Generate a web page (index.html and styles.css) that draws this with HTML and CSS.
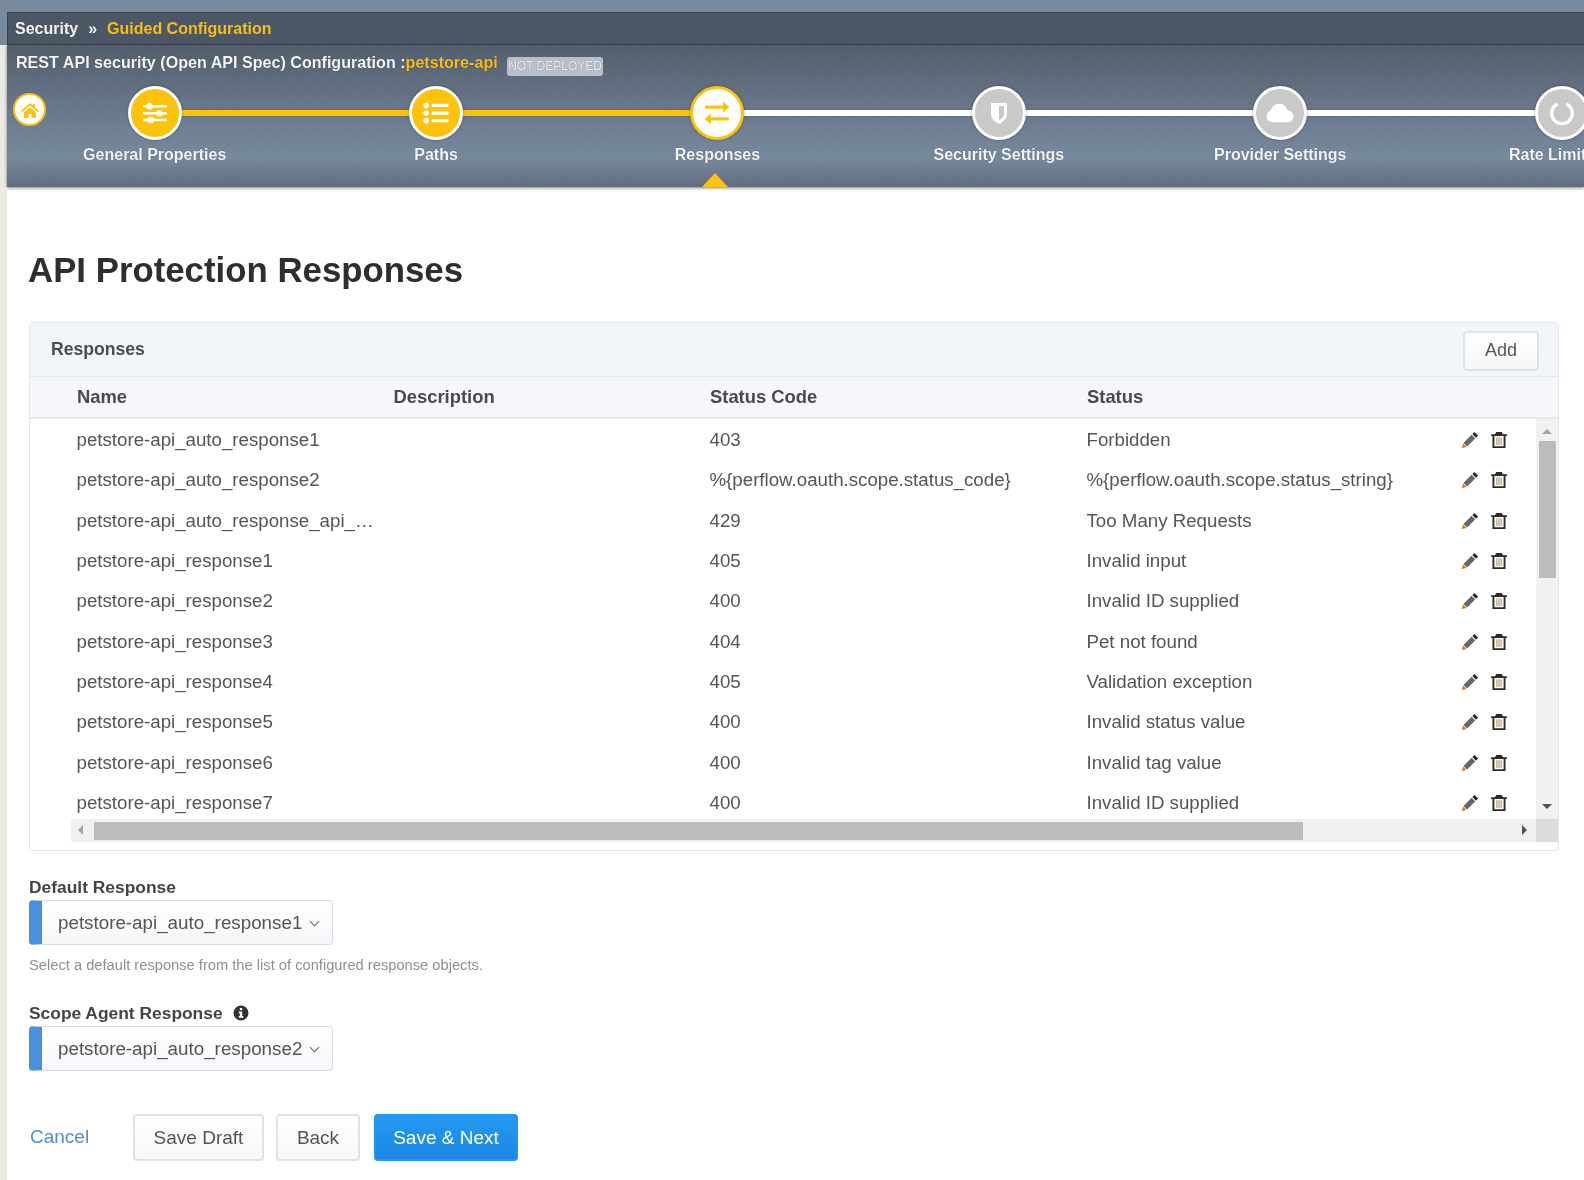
FILE: index.html
```html
<!DOCTYPE html>
<html lang="en">
<head>
  <meta charset="UTF-8">
  <title>API Protection Responses</title>
  <link rel="stylesheet" href="styles.css">
</head>
<body>
  <svg class="sprites" width="0" height="0">
    <symbol id="pencil" viewBox="0 0 16 16"><path d="M12 .8l3.200 3.200-1.900 1.900-3.200-3.200z"/><path fill="#666" d="M9.400 3.400l3.200 3.200-7.200 7.200-3.200-3.200z"/><path fill="#c97a1e" d="M1.800 11.200l3 3-4 .9z"/></symbol>
    <symbol id="trash" viewBox="0 0 16 16"><path d="M5.500 .8h5l1 2H15v1.700h-1.200V15.200H2.200V4.500H1V2.800h3.500zM3.900 4.500v9h8.200v-9z"/><path fill="#c4a877" d="M5.500 5.500h1.200v7H5.500zM7.400 5.500h1.200v7H7.400zM9.300 5.500h1.200v7H9.300z"/></symbol>
  </svg>
  <header class="top">
    <div class="crumbs">
      <span>Security</span><span class="crumb-sep">&raquo;</span><span class="gold">Guided Configuration</span>
    </div>
    <div class="wizard">
      <div class="config-title">
        REST API security (Open API Spec) Configuration :<span class="gold">petstore-api</span>
        <span class="badge">NOT DEPLOYED</span>
      </div>
      <div class="home">
        <svg viewBox="0 0 20 20" width="20" height="20"><path fill="#fcc30a" d="M10 3l3 2.600V4h2v3.300L19 11l-1.200 1.200L10 5.400 2.200 12.200 1 11zM4 12.500l6-5.200 6 5.200V18h-4.400v-4H8.400v4H4z"/></svg>
      </div>
      <ol class="steps">
        <li class="step done">
          <span class="dot">
            <svg viewBox="0 0 24 24" width="26" height="26" fill="#fff"><path d="M1 4.500h22v2.400H1zM1 11h22v2.400H1zM1 17.300h22v2.400H1z"/><circle cx="7" cy="5.700" r="3"/><circle cx="16" cy="12.200" r="3"/><circle cx="8" cy="18.500" r="3"/></svg>
          </span>
          <span class="step-name">General Properties</span>
        </li>
        <li class="step done">
          <span class="dot">
            <svg viewBox="0 0 24 24" width="26" height="26" fill="#fff"><circle cx="3" cy="5" r="2.600"/><circle cx="3" cy="12" r="2.600"/><circle cx="3" cy="19" r="2.600"/><path d="M8 3.500h15.500v3H8zM8 10.500h15.500v3H8zM8 17.500h15.500v3H8z"/></svg>
          </span>
          <span class="step-name">Paths</span>
        </li>
        <li class="step current">
          <span class="dot">
            <svg viewBox="0 0 24 24" width="26" height="26" fill="#fcc30a"><path d="M1 6.500h16.500V3L23.500 8l-6 5V9.500H1zM23 14.500v3H6.500V14L.5 19l6 5v-3.500H23z" transform="translate(0 -1.500)"/></svg>
          </span>
          <span class="step-name">Responses</span>
        </li>
        <li class="step">
          <span class="dot">
            <svg viewBox="0 0 24 24" width="24" height="24"><path fill="#fff" d="M4 2h16v11c0 5-4 8-8 10-4-2-8-5-8-10z"/><path fill="#c9c9c9" d="M12 5h5v8c0 3-2.500 5-5 6.500z"/></svg>
          </span>
          <span class="step-name">Security Settings</span>
        </li>
        <li class="step">
          <span class="dot">
            <svg viewBox="0 0 24 24" width="28" height="28" fill="#fff"><path d="M6 20c-3 0-5.500-2.300-5.500-5.200 0-2.400 1.600-4.300 3.700-5C5 6.200 8 4 11.300 4c3.500 0 6.400 2.400 7 5.600 3 .3 5.200 2.600 5.200 5.300 0 2.900-2.500 5.100-5.500 5.100z"/></svg>
          </span>
          <span class="step-name">Provider Settings</span>
        </li>
        <li class="step step-last">
          <span class="dot">
            <svg viewBox="0 0 24 24" width="26" height="26" fill="none" stroke="#fff" stroke-width="3.200"><path d="M8 3.700a9.500 9.500 0 1 0 8 0"/></svg>
          </span>
          <span class="step-name">Rate Limit</span>
        </li>
      </ol>
      <span class="pointer"></span>
    </div>
  </header>

  <main class="content">
    <h1>API Protection Responses</h1>

    <section class="panel">
      <div class="panel-head">
        <span>Responses</span>
        <button class="btn btn-add">Add</button>
      </div>
      <div class="row row-head">
        <span>Name</span><span>Description</span><span>Status Code</span><span>Status</span>
      </div>
      <div class="table-area">
        <div class="rows">
          <div class="row"><span>petstore-api_auto_response1</span><span></span><span>403</span><span>Forbidden</span><span class="actions"><svg><use href="#pencil"/></svg><svg><use href="#trash"/></svg></span></div>
          <div class="row"><span>petstore-api_auto_response2</span><span></span><span>%{perflow.oauth.scope.status_code}</span><span>%{perflow.oauth.scope.status_string}</span><span class="actions"><svg><use href="#pencil"/></svg><svg><use href="#trash"/></svg></span></div>
          <div class="row"><span>petstore-api_auto_response_api_…</span><span></span><span>429</span><span>Too Many Requests</span><span class="actions"><svg><use href="#pencil"/></svg><svg><use href="#trash"/></svg></span></div>
          <div class="row"><span>petstore-api_response1</span><span></span><span>405</span><span>Invalid input</span><span class="actions"><svg><use href="#pencil"/></svg><svg><use href="#trash"/></svg></span></div>
          <div class="row"><span>petstore-api_response2</span><span></span><span>400</span><span>Invalid ID supplied</span><span class="actions"><svg><use href="#pencil"/></svg><svg><use href="#trash"/></svg></span></div>
          <div class="row"><span>petstore-api_response3</span><span></span><span>404</span><span>Pet not found</span><span class="actions"><svg><use href="#pencil"/></svg><svg><use href="#trash"/></svg></span></div>
          <div class="row"><span>petstore-api_response4</span><span></span><span>405</span><span>Validation exception</span><span class="actions"><svg><use href="#pencil"/></svg><svg><use href="#trash"/></svg></span></div>
          <div class="row"><span>petstore-api_response5</span><span></span><span>400</span><span>Invalid status value</span><span class="actions"><svg><use href="#pencil"/></svg><svg><use href="#trash"/></svg></span></div>
          <div class="row"><span>petstore-api_response6</span><span></span><span>400</span><span>Invalid tag value</span><span class="actions"><svg><use href="#pencil"/></svg><svg><use href="#trash"/></svg></span></div>
          <div class="row"><span>petstore-api_response7</span><span></span><span>400</span><span>Invalid ID supplied</span><span class="actions"><svg><use href="#pencil"/></svg><svg><use href="#trash"/></svg></span></div>
        </div>
        <div class="vscroll">
          <span class="arrow-up"></span>
          <span class="vthumb"></span>
          <span class="arrow-down"></span>
        </div>
      </div>
      <div class="hscroll-line">
        <div class="hscroll">
          <span class="arrow-left"></span>
          <span class="hthumb"></span>
          <span class="arrow-right"></span>
        </div>
        <span class="corner"></span>
      </div>
    </section>

    <div class="field">
      <label>Default Response</label>
      <div class="select"><span class="select-text">petstore-api_auto_response1</span><span class="chevron"></span></div>
      <p class="help">Select a default response from the list of configured response objects.</p>
    </div>

    <div class="field field-scope">
      <label>Scope Agent Response
        <svg viewBox="0 0 16 16" width="16" height="16"><path fill="#333" d="M8 .5a7.500 7.500 0 1 0 0 15 7.500 7.500 0 0 0 0-15zM6.800 3h2.400v2.200H6.800zM5.800 6.500h3.400V11h1v1.800H5.800V11h1V8.300h-1z"/></svg>
      </label>
      <div class="select"><span class="select-text">petstore-api_auto_response2</span><span class="chevron"></span></div>
    </div>

    <div class="form-actions">
      <a class="cancel" href="#">Cancel</a>
      <button class="btn btn-draft">Save Draft</button>
      <button class="btn btn-back">Back</button>
      <button class="btn btn-primary">Save &amp; Next</button>
    </div>
  </main>
</body>
</html>
```

FILE: styles.css
```css
html {
  font-family: "Liberation Sans", Arial, sans-serif;
}

body {
  margin: 0;
  background: #ebebe6;
  color: #555;
  filter: blur(.4px);
  height: 1180px;
  overflow: hidden;
}

.sprites {
  position: absolute;
}

.gold {
  color: #f8bd16;
}

/* header */
.top {
  background: linear-gradient(#7a8a9e 0, #7a8a9e 45px, #ebebe6 45px);
  padding: 12px 0 0 7px;
}

.crumbs {
  align-items: center;
  background: #4c5765;
  border: 1px solid #39424d;
  border-right: 0;
  box-sizing: border-box;
  color: #f2f2f2;
  display: flex;
  font-size: 16px;
  font-weight: bold;
  height: 33px;
  padding-left: 7px;
}

.crumb-sep {
  margin: 0 10px 0 10px;
}

.wizard {
  background:
    repeating-linear-gradient(135deg, rgba(255,255,255,.025) 0 1px, transparent 1px 4px),
    linear-gradient(#525d6b 0, #6f8095 60%, #76889c 80%, #5f6c7c 100%);
  box-shadow: 0 1px 3px rgba(0,0,0,.5);
  height: 142px;
  overflow: hidden;
  position: relative;
}

.config-title {
  color: #f5f5f5;
  font-size: 16.100px;
  font-weight: bold;
  padding: 8px 0 0 9px;
  text-shadow: 0 0 1px rgba(0,0,0,.4);
}

.badge {
  background: #b9bfc9;
  border-radius: 3px;
  color: #eef0f3;
  display: inline-block;
  font-size: 12px;
  font-weight: normal;
  line-height: 19px;
  margin-left: 5px;
  padding: 0 1px;
  vertical-align: -2px;
}

.home {
  align-items: center;
  background: #fff;
  border: 2px solid #fcc30a;
  border-radius: 50%;
  box-sizing: border-box;
  display: flex;
  height: 33px;
  justify-content: center;
  left: 6px;
  position: absolute;
  top: 48px;
  width: 33px;
}

.steps {
  display: flex;
  list-style: none;
  margin: 10px 0 0;
  padding: 0 0 0 7px;
  width: 1700px;
}

.step {
  align-items: center;
  color: #f2f4f6;
  display: flex;
  flex: 0 0 281.400px;
  flex-direction: column;
  font-size: 16px;
  font-weight: bold;
  position: relative;
  text-shadow: 0 0 1px rgba(0,0,0,.4);
}

.step::after {
  background: #fff;
  box-shadow: 0 0 2px rgba(0,0,0,.35);
  content: "";
  height: 6px;
  left: 50%;
  position: absolute;
  top: 24px;
  width: 281.400px;
}

.step.done::after {
  background: #fcc30a;
}

.dot {
  align-items: center;
  background: #c9c9c9;
  border: 3px solid #fff;
  border-radius: 50%;
  box-shadow: 0 0 3px rgba(0,0,0,.35);
  box-sizing: border-box;
  display: flex;
  height: 54px;
  justify-content: center;
  position: relative;
  width: 54px;
  z-index: 1;
}

.done .dot {
  background: #fcc30a;
}

.current .dot {
  background: #fff;
  border-color: #fcc30a;
}

.step-name {
  margin-top: 6px;
  white-space: nowrap;
}

.step-last .step-name {
  margin-right: 28px;
}

.pointer {
  border-bottom: 14px solid #fcc30a;
  border-left: 13px solid transparent;
  border-right: 13px solid transparent;
  bottom: 0;
  left: 695px;
  position: absolute;
}

/* content */
.content {
  background: #fff;
  height: 993px;
  margin-left: 7px;
  padding: 58px 25px 0 22px;
}

h1 {
  color: #2e2e2e;
  font-size: 34.800px;
  line-height: 50px;
  margin: 0 0 27px -1px;
}

.panel {
  border: 1px solid #e4e7ec;
  border-radius: 4px;
  height: 527px;
  overflow: hidden;
}

.panel-head {
  align-items: center;
  background: #f2f5f9;
  border-bottom: 1px solid #e4e7ec;
  color: #4d4d4d;
  display: flex;
  font-size: 17.600px;
  font-weight: bold;
  height: 53px;
  justify-content: space-between;
  padding: 0 19px 0 21px;
}

.row {
  align-items: center;
  display: grid;
  font-size: 18.700px;
  grid-template-columns: 316.500px 316.500px 377px 373px 1fr;
  height: 40.300px;
  padding-left: 46.500px;
  white-space: nowrap;
}

.row-head {
  background: #f6f8fb;
  border-bottom: 2px solid #e4e7ec;
  box-sizing: border-box;
  color: #4a4a4a;
  font-size: 18.400px;
  font-weight: bold;
  height: 42px;
  padding-left: 47px;
}

.table-area {
  display: flex;
  height: 400px;
}

.rows {
  flex: 1;
  overflow: hidden;
  padding-top: 1px;
}

.actions {
  display: flex;
  gap: 11px;
  padding-left: 1px;
}

.actions svg {
  fill: #2b2b2b;
  height: 18px;
  width: 18px;
}

.vscroll, .hscroll, .corner {
  background: #f1f1f1;
}

.vscroll {
  align-items: center;
  display: flex;
  flex: 0 0 22px;
  flex-direction: column;
  position: relative;
}

.vthumb {
  background: #bcbcbc;
  height: 137px;
  margin-top: 22px;
  width: 17px;
}

.arrow-up, .arrow-down {
  border-left: 5px solid transparent;
  border-right: 5px solid transparent;
  left: 6px;
  position: absolute;
}

.arrow-up {
  border-bottom: 5px solid #a3a3a3;
  top: 10px;
}

.arrow-down {
  border-top: 5px solid #505050;
  bottom: 10px;
}

.hscroll-line {
  display: flex;
  height: 23px;
  padding-left: 41px;
}

.hscroll {
  align-items: center;
  display: flex;
  flex: 1;
  position: relative;
}

.hthumb {
  background: #bcbcbc;
  height: 18px;
  margin-left: 23px;
  width: 1209px;
}

.arrow-left, .arrow-right {
  border-bottom: 5px solid transparent;
  border-top: 5px solid transparent;
  position: absolute;
  top: 6px;
}

.arrow-left {
  border-right: 5px solid #a3a3a3;
  left: 7px;
}

.arrow-right {
  border-left: 5px solid #505050;
  right: 9px;
}

.corner {
  background: #dcdcdc;
  flex: 0 0 22px;
}

/* form */
.field {
  margin-top: 24px;
}

label {
  align-items: center;
  color: #444;
  display: flex;
  font-size: 17.400px;
  font-weight: bold;
  gap: 10px;
  height: 24px;
}

.select {
  align-items: center;
  background: linear-gradient(#fff, #f6f7f9);
  border: 1px solid #d9dde3;
  border-left: 13px solid #4a90e2;
  border-radius: 4px;
  box-sizing: border-box;
  color: #555;
  display: flex;
  font-size: 18.800px;
  height: 45px;
  margin-top: 1px;
  padding-left: 16px;
  width: 304px;
}

.chevron {
  border-bottom: 1.500px solid #666;
  border-right: 1.500px solid #666;
  height: 6px;
  margin: 0 0 2px 9px;
  transform: rotate(45deg);
  width: 6px;
}

.help {
  color: #909090;
  font-size: 14.700px;
  margin: 12px 0 0;
}

.field-scope {
  margin-top: 28px;
}

.btn {
  background: linear-gradient(#fff, #f6f7f9);
  border: 2px solid #dfe2e8;
  border-radius: 4px;
  color: #555;
  font-family: inherit;
  font-size: 19px;
  height: 47px;
}

.btn-add {
  font-size: 18px;
  height: 40px;
  margin-top: 2px;
  width: 76px;
}

.form-actions {
  align-items: center;
  display: flex;
  margin-top: 43px;
}

.cancel {
  color: #4f8fc7;
  font-size: 19px;
  margin: 0 0 2px 1px;
  text-decoration: none;
  width: 103px;
}

.btn-draft {
  width: 131px;
}

.btn-back {
  margin-left: 12px;
  width: 84px;
}

.btn-primary {
  background: linear-gradient(#2299f2, #1c87e3);
  border-color: #2196f3;
  color: #fff;
  margin-left: 14px;
  width: 144px;
}
```
